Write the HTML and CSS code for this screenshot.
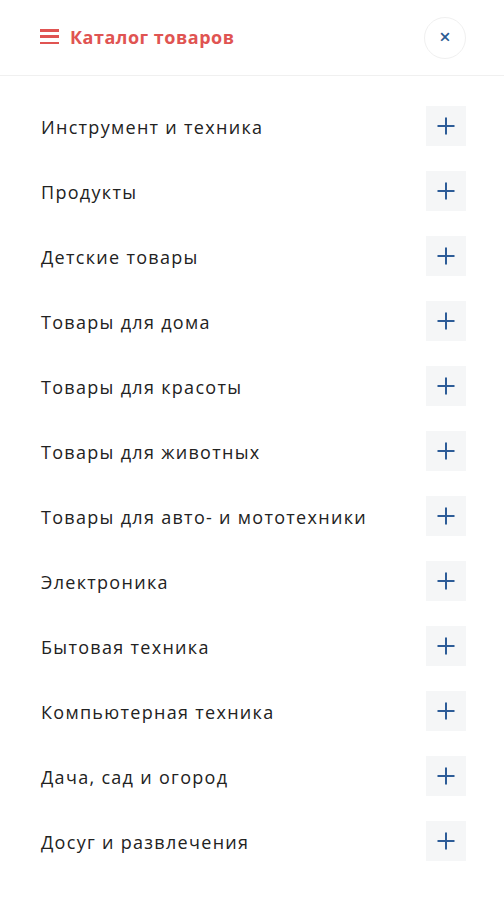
FILE: index.html
```html
<!DOCTYPE html>
<html lang="ru">
<head>
  <meta charset="UTF-8">
  <meta name="viewport" content="width=device-width, initial-scale=1.0">
  <title>Каталог товаров</title>
  <link rel="stylesheet" href="styles.css">
</head>
<body>

  <div class="menu">
    <div class="menu-header">
      <div class="menu-title">
        <span class="burger"><i></i><i></i><i></i></span>
        Каталог товаров
      </div>
      <button class="close-btn">&times;</button>
    </div>

    <ul class="catalog">
      <li><span>Инструмент и техника</span><button class="plus"></button></li>
      <li><span>Продукты</span><button class="plus"></button></li>
      <li><span>Детские товары</span><button class="plus"></button></li>
      <li><span>Товары для дома</span><button class="plus"></button></li>
      <li><span>Товары для красоты</span><button class="plus"></button></li>
      <li><span>Товары для животных</span><button class="plus"></button></li>
      <li><span>Товары для авто- и мототехники</span><button class="plus"></button></li>
      <li><span>Электроника</span><button class="plus"></button></li>
      <li><span>Бытовая техника</span><button class="plus"></button></li>
      <li><span>Компьютерная техника</span><button class="plus"></button></li>
      <li><span>Дача, сад и огород</span><button class="plus"></button></li>
      <li><span>Досуг и развлечения</span><button class="plus"></button></li>
    </ul>
  </div>

</body>
</html>
```

FILE: styles.css
```css
body {
  margin: 0;
  font-family: "Open Sans", "Noto Sans", sans-serif;
  background-color: white;
  color: #222;
}

.menu {
  width: 504px;
}

.menu-header {
  height: 76px;
  display: flex;
  align-items: center;
  justify-content: space-between;
  padding: 0 38px 0 40px;
  border-bottom: 1px solid #f0f0f0;
  box-sizing: border-box;
}

.menu-title {
  display: flex;
  align-items: center;
  gap: 11px;
  color: #e05452;
  font-size: 18px;
  font-weight: 700;
  letter-spacing: 0.5px;
  padding-bottom: 2px;
}

.burger {
  display: flex;
  flex-direction: column;
  justify-content: space-between;
  width: 19px;
  height: 15px;
}

.burger i {
  display: block;
  height: 2.5px;
  background-color: #e05452;
}

.close-btn {
  width: 42px;
  height: 42px;
  border-radius: 50%;
  border: 1px solid #f0f0f0;
  background-color: white;
  color: #2b5a92;
  font-size: 20px;
  line-height: 1;
  padding: 0 0 2px;
  font-family: "Open Sans", sans-serif;
  font-weight: 600;
}

.catalog {
  list-style: none;
  margin: 0;
  padding: 17px 38px 0 41px;
}

.catalog li {
  height: 65px;
  display: flex;
  align-items: center;
  justify-content: space-between;
  font-size: 18px;
  letter-spacing: 1.3px;
}

.catalog li span {
  padding-top: 2px;
}

.plus {
  position: relative;
  width: 40px;
  height: 40px;
  border: none;
  background-color: #f5f6f7;
  padding: 0;
}

.plus::before,
.plus::after {
  content: "";
  position: absolute;
  left: 50%;
  top: 50%;
  background-color: #2d5c98;
}

.plus::before {
  width: 17px;
  height: 2px;
  transform: translate(-50%, -50%);
}

.plus::after {
  width: 2px;
  height: 17px;
  transform: translate(-50%, -50%);
}
```
